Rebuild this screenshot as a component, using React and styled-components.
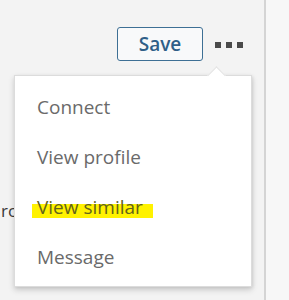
import React from "react";
import styled, { createGlobalStyle } from "styled-components";

const Global = createGlobalStyle`
  html, body { margin: 0; padding: 0; }
  body {
    width: 289px;
    height: 300px;
    overflow: hidden;
    background: #f3f3f3;
    font-family: "Open Sans", "Noto Sans", "Liberation Sans", sans-serif;
  }
`;

const Page = styled.div`
  display: flex;
  width: 289px;
  height: 300px;
`;

const Main = styled.div`
  position: relative;
  width: 264px;
  flex: none;
  background: #f3f3f3;
`;

const Divider = styled.div`
  width: 2px;
  flex: none;
  background: #d4d4d4;
`;

const Side = styled.div`
  flex: 1;
  background: #f7f7f7;
`;

const Toolbar = styled.div`
  display: flex;
  align-items: center;
  justify-content: flex-end;
  gap: 12px;
  padding: 27px 21px 0 0;
`;

const SaveButton = styled.button`
  box-sizing: border-box;
  width: 86px;
  height: 34px;
  border: 1.5px solid #3d6f94;
  border-radius: 3px;
  background: #f8f9fa;
  color: #2f5f88;
  font-family: inherit;
  font-size: 19px;
  font-weight: 600;
  padding: 0;
  cursor: pointer;
`;

const Dots = styled.div`
  display: flex;
  gap: 5px;
  padding-top: 1px;
`;

const Dot = styled.span`
  width: 6px;
  height: 6px;
  background: #4a4a4a;
`;

const BehindText = styled.div`
  margin-top: 138px;
  padding-left: 1px;
  font-size: 17px;
  color: #3a3a3a;
  line-height: 24px;
`;

const Menu = styled.ul`
  position: absolute;
  left: 14px;
  top: 75px;
  width: 238px;
  margin: 0;
  padding: 6px 0 4px;
  list-style: none;
  background: #ffffff;
  border: 1px solid #dcdcdc;
  box-sizing: border-box;
  box-shadow: 0 3px 6px rgba(0, 0, 0, 0.16), 1px 1px 3px rgba(0, 0, 0, 0.08);

  &::before {
    content: "";
    position: absolute;
    top: -7px;
    right: 28px;
    width: 12px;
    height: 12px;
    background: #ffffff;
    border-left: 1px solid #e2e2e2;
    border-top: 1px solid #e2e2e2;
    transform: rotate(45deg);
  }
`;

const Item = styled.li`
  height: 50px;
  line-height: 50px;
  padding-left: 22px;
  font-size: 19px;
  color: #6a6a6a;
`;

const Highlight = styled.span`
  display: inline-block;
  margin-left: -5px;
  padding: 0 10px 0 5px;
  line-height: 50px;
  color: #63631a;
  background: linear-gradient(
    to bottom,
    transparent 0,
    transparent 22px,
    #fff200 22px,
    #fff200 36px,
    transparent 36px
  );
`;

const items = ["Connect", "View profile", "View similar", "Message"];

export default function App() {
  return (
    <>
      <Global />
      <Page>
        <Main>
          <Toolbar>
            <SaveButton>Save</SaveButton>
            <Dots>
              <Dot />
              <Dot />
              <Dot />
            </Dots>
          </Toolbar>
          <BehindText>rce</BehindText>
          <Menu>
            {items.map((t) => (
              <Item key={t}>
                {t === "View similar" ? <Highlight>{t}</Highlight> : t}
              </Item>
            ))}
          </Menu>
        </Main>
        <Divider />
        <Side />
      </Page>
    </>
  );
}
